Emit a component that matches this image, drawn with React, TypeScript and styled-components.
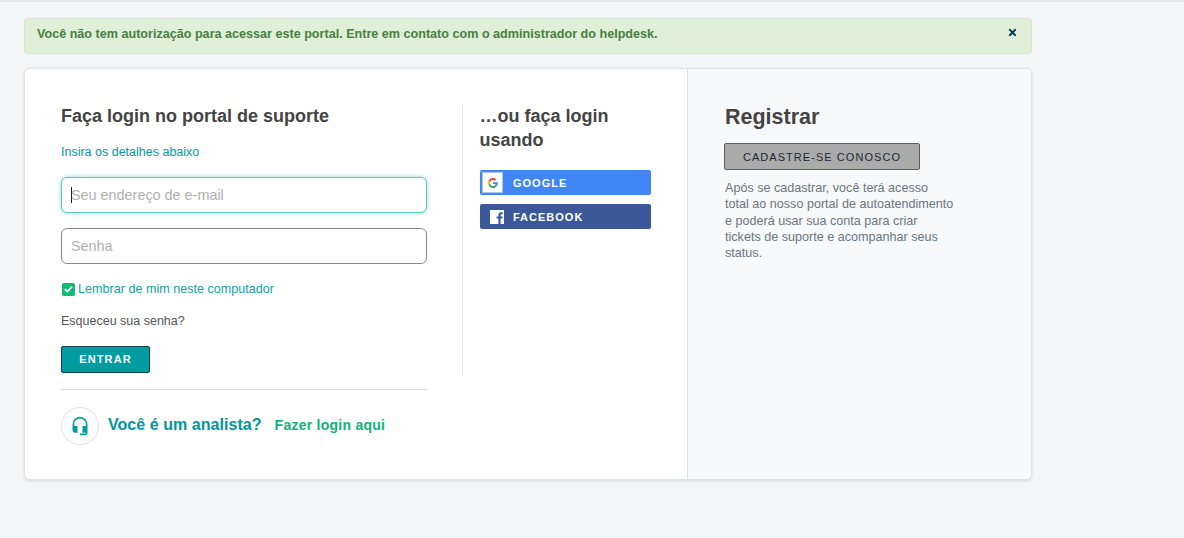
import { FC } from 'react'
import styled, { createGlobalStyle } from 'styled-components'
import { FaTimes } from 'react-icons/fa'
import { MdHeadsetMic } from 'react-icons/md'

const GlobalStyle = createGlobalStyle`
	* {
		box-sizing: border-box;
	}

	html,
	body {
		margin: 0;
		height: 100%;
	}

	body {
		background: #f3f5f7;
		font-family: 'Liberation Sans', Arial, sans-serif;
		color: #444;
	}
`

const Page = styled.div`
	height: 538px;
	overflow: hidden;
	border-top: 2px solid #e6e7e9;
	padding: 16px 0 0 24px;
`

const Alert = styled.div`
	width: 1008px;
	height: 36px;
	display: flex;
	justify-content: space-between;
	padding: 8px 13px 0 12px;
	background: #dfefd8;
	border: 1px solid #d6e9c6;
	border-radius: 4px;
	color: #47803f;
	font-size: 12.6px;
	font-weight: bold;
	line-height: 15px;
	margin-bottom: 14px;
`

const CloseIcon = styled(FaTimes)`
	width: 11px;
	height: 11px;
	color: #0c3a5e;
`

const Card = styled.div`
	width: 1008px;
	height: 412px;
	display: flex;
	background: #fff;
	border: 1px solid #dfe3e6;
	border-radius: 6px;
	box-shadow: 0 1px 3px rgba(0, 0, 0, 0.12);
	overflow: hidden;
`

const LoginPane = styled.div`
	width: 662px;
	display: flex;
	padding: 35px 36px 0;
`

const FormColumn = styled.div`
	width: 366px;
	flex-shrink: 0;
`

const Heading = styled.h2`
	margin: 0;
	font-size: 18px;
	line-height: 24px;
	font-weight: bold;
	color: #444;
`

const SocialHeading = styled(Heading)`
	margin: -1px 0 0 -0.5px;
`

const Hint = styled.p`
	margin: 16px 0 0;
	font-size: 12.5px;
	line-height: 16px;
	color: #009a9c;
`

const FieldWrap = styled.div`
	position: relative;
	margin-top: 17px;

	& + & {
		margin-top: 15px;
	}
`

const Field = styled.input<{ $focused?: boolean }>`
	display: block;
	width: 100%;
	height: 36px;
	padding: 0 9px;
	border: 1px solid ${({ $focused }) => ($focused ? '#66c6c4' : '#8a8a8a')};
	border-radius: 6px;
	box-shadow: ${({ $focused }) => ($focused ? '0 0 4px rgba(64, 190, 190, 0.65)' : 'none')};
	background: #fff;
	font-family: inherit;
	font-size: 14.4px;
	color: #444;
	outline: none;

	&::placeholder {
		color: #b0b0b0;
		opacity: 1;
	}
`

const Caret = styled.span`
	position: absolute;
	left: 10px;
	top: 10px;
	width: 1px;
	height: 16px;
	background: #222;
`

const RememberRow = styled.label`
	display: flex;
	align-items: center;
	gap: 3px;
	margin-top: 17px;
	padding-left: 1px;
	font-size: 12.6px;
	line-height: 16px;
	color: #12a3a3;
`

const CheckBox = styled.span`
	width: 13px;
	height: 13px;
	border-radius: 2px;
	background: #0dbb73;
	display: flex;
	align-items: center;
	justify-content: center;
`

const Forgot = styled.div`
	margin-top: 16px;
	font-size: 12.5px;
	line-height: 16px;
	color: #555;
`

const SubmitButton = styled.button`
	display: block;
	width: 89px;
	height: 27px;
	margin-top: 17px;
	padding: 0 0 2px;
	background: #009c9f;
	border: 1px solid #07424a;
	border-radius: 2px;
	color: #fff;
	font-family: inherit;
	font-size: 11px;
	font-weight: bold;
	letter-spacing: 1.1px;
`

const AgentRow = styled.div`
	display: flex;
	align-items: center;
	margin-top: 16px;
	padding-top: 17px;
	border-top: 1px solid #dcdcdc;
`

const AgentBadge = styled.span`
	width: 38px;
	height: 38px;
	border: 1px solid #e2e2e2;
	border-radius: 50%;
	display: flex;
	align-items: center;
	justify-content: center;
	color: #009c9f;
	margin-right: 9px;
`

const AgentText = styled.span`
	font-size: 16px;
	font-weight: bold;
	color: #00959b;
	margin: 0 13px 2px 0;
	letter-spacing: 0.05px;
`

const AgentLink = styled.a`
	font-size: 14px;
	font-weight: bold;
	color: #10b27c;
	margin-bottom: 3px;
	letter-spacing: 0.25px;
`

const SocialColumn = styled.div`
	width: 189px;
	height: 270px;
	margin: 1px 0 0 35px;
	padding-left: 17px;
	border-left: 1px solid #e8e8e8;
`

const SocialList = styled.div`
	margin-top: 18px;
`

const SocialButton = styled.a<{ $bg: string }>`
	display: flex;
	align-items: center;
	width: 171px;
	height: 25px;
	margin-bottom: 9px;
	border-radius: 2px;
	background: ${({ $bg }) => $bg};
	color: #fff;
	font-size: 11px;
	font-weight: bold;
	letter-spacing: 1px;
`

const GoogleBox = styled.span`
	width: 21px;
	height: 21px;
	margin: 0 10px 0 2px;
	background: #fff;
	border: 1px solid #a9c6f8;
	display: flex;
	align-items: center;
	justify-content: center;
`

const FacebookBox = styled.svg`
	width: 14px;
	height: 14px;
	margin: 0 9px 0 10px;
`

const RegisterPane = styled.div`
	flex: 1;
	background: #f8f9fb;
	border-left: 1px solid #dfe3e6;
	padding: 35px 36px 0;
`

const RegisterTitle = styled.h2`
	margin: 0 0 0 1px;
	font-size: 21.5px;
	line-height: 26px;
	font-weight: bold;
	color: #444;
`

const RegisterButton = styled.button`
	display: block;
	width: 196px;
	height: 27px;
	margin-top: 13px;
	background: #ababab;
	border: 1px solid #5c5c5c;
	border-radius: 2px;
	color: #1d2733;
	font-family: inherit;
	font-size: 11px;
	letter-spacing: 1.05px;
`

const RegisterText = styled.p`
	width: 230px;
	margin: 10px 0 0 1px;
	padding-right: 1px;
	font-size: 12.6px;
	line-height: 16.25px;
	color: #6a7680;
`

const GoogleIcon: FC = () => (
	<svg width="10" height="10" viewBox="0 0 48 48">
		<path fill="#EA4335" d="M24 9.5c3.5 0 6.700 1.200 9.200 3.600l6.900-6.900C35.900 2.400 30.400 0 24 0 14.600 0 6.500 5.400 2.600 13.200l8 6.200C12.500 13.600 17.800 9.500 24 9.500z" />
		<path fill="#4285F4" d="M47 24.500c0-1.600-.1-3.100-.4-4.500H24v9h12.900c-.6 3-2.200 5.500-4.800 7.200l7.700 6C44.300 38 47 31.800 47 24.500z" />
		<path fill="#FBBC05" d="M10.600 28.600c-.5-1.400-.8-3-.8-4.600s.3-3.200.8-4.600l-8-6.200C.9 16.500 0 20.100 0 24s.9 7.500 2.600 10.800l8-6.200z" />
		<path fill="#34A853" d="M24 48c6.500 0 11.900-2.100 15.800-5.800l-7.700-6c-2.100 1.400-4.900 2.300-8.100 2.300-6.200 0-11.500-4.200-13.400-9.900l-8 6.200C6.500 42.600 14.600 48 24 48z" />
	</svg>
)

const App: FC = () => (
	<>
		<GlobalStyle />
		<Page>
			<Alert>
				Você não tem autorização para acessar este portal. Entre em contato com o administrador do helpdesk.
				<CloseIcon />
			</Alert>
			<Card>
				<LoginPane>
					<FormColumn>
						<Heading>Faça login no portal de suporte</Heading>
						<Hint>Insira os detalhes abaixo</Hint>
						<FieldWrap>
							<Field $focused placeholder="Seu endereço de e-mail" />
							<Caret />
						</FieldWrap>
						<FieldWrap>
							<Field placeholder="Senha" />
						</FieldWrap>
						<RememberRow>
							<CheckBox>
								<svg width="9" height="8" viewBox="0 0 10 8">
									<path d="M1 4l2.800 2.800L9 1.400" fill="none" stroke="#fff" strokeWidth="2" />
								</svg>
							</CheckBox>
							Lembrar de mim neste computador
						</RememberRow>
						<Forgot>Esqueceu sua senha?</Forgot>
						<SubmitButton>ENTRAR</SubmitButton>
						<AgentRow>
							<AgentBadge>
								<MdHeadsetMic size={20} />
							</AgentBadge>
							<AgentText>Você é um analista?</AgentText>
							<AgentLink>Fazer login aqui</AgentLink>
						</AgentRow>
					</FormColumn>
					<SocialColumn>
						<SocialHeading>…ou faça login usando</SocialHeading>
						<SocialList>
							<SocialButton $bg="#4285f4">
								<GoogleBox>
									<GoogleIcon />
								</GoogleBox>
								GOOGLE
							</SocialButton>
							<SocialButton $bg="#3b5998">
								<FacebookBox viewBox="0 0 14 14">
									<path
										fill="#fff"
										d="M0 0h14v14h-3.400V8.600h1.800l.3-2.100h-2.100V5.200c0-.6.200-1 1-1h1.100V2.300c-.2 0-.9-.1-1.600-.1-1.600 0-2.700 1-2.700 2.800v1.500H6.600v2.100h1.800V14H0z"
									/>
								</FacebookBox>
								FACEBOOK
							</SocialButton>
						</SocialList>
					</SocialColumn>
				</LoginPane>
				<RegisterPane>
					<RegisterTitle>Registrar</RegisterTitle>
					<RegisterButton>CADASTRE-SE CONOSCO</RegisterButton>
					<RegisterText>
						Após se cadastrar, você terá acesso total ao nosso portal de autoatendimento e poderá usar sua conta para criar tickets de suporte e acompanhar seus status.
					</RegisterText>
				</RegisterPane>
			</Card>
		</Page>
	</>
)

export default App
